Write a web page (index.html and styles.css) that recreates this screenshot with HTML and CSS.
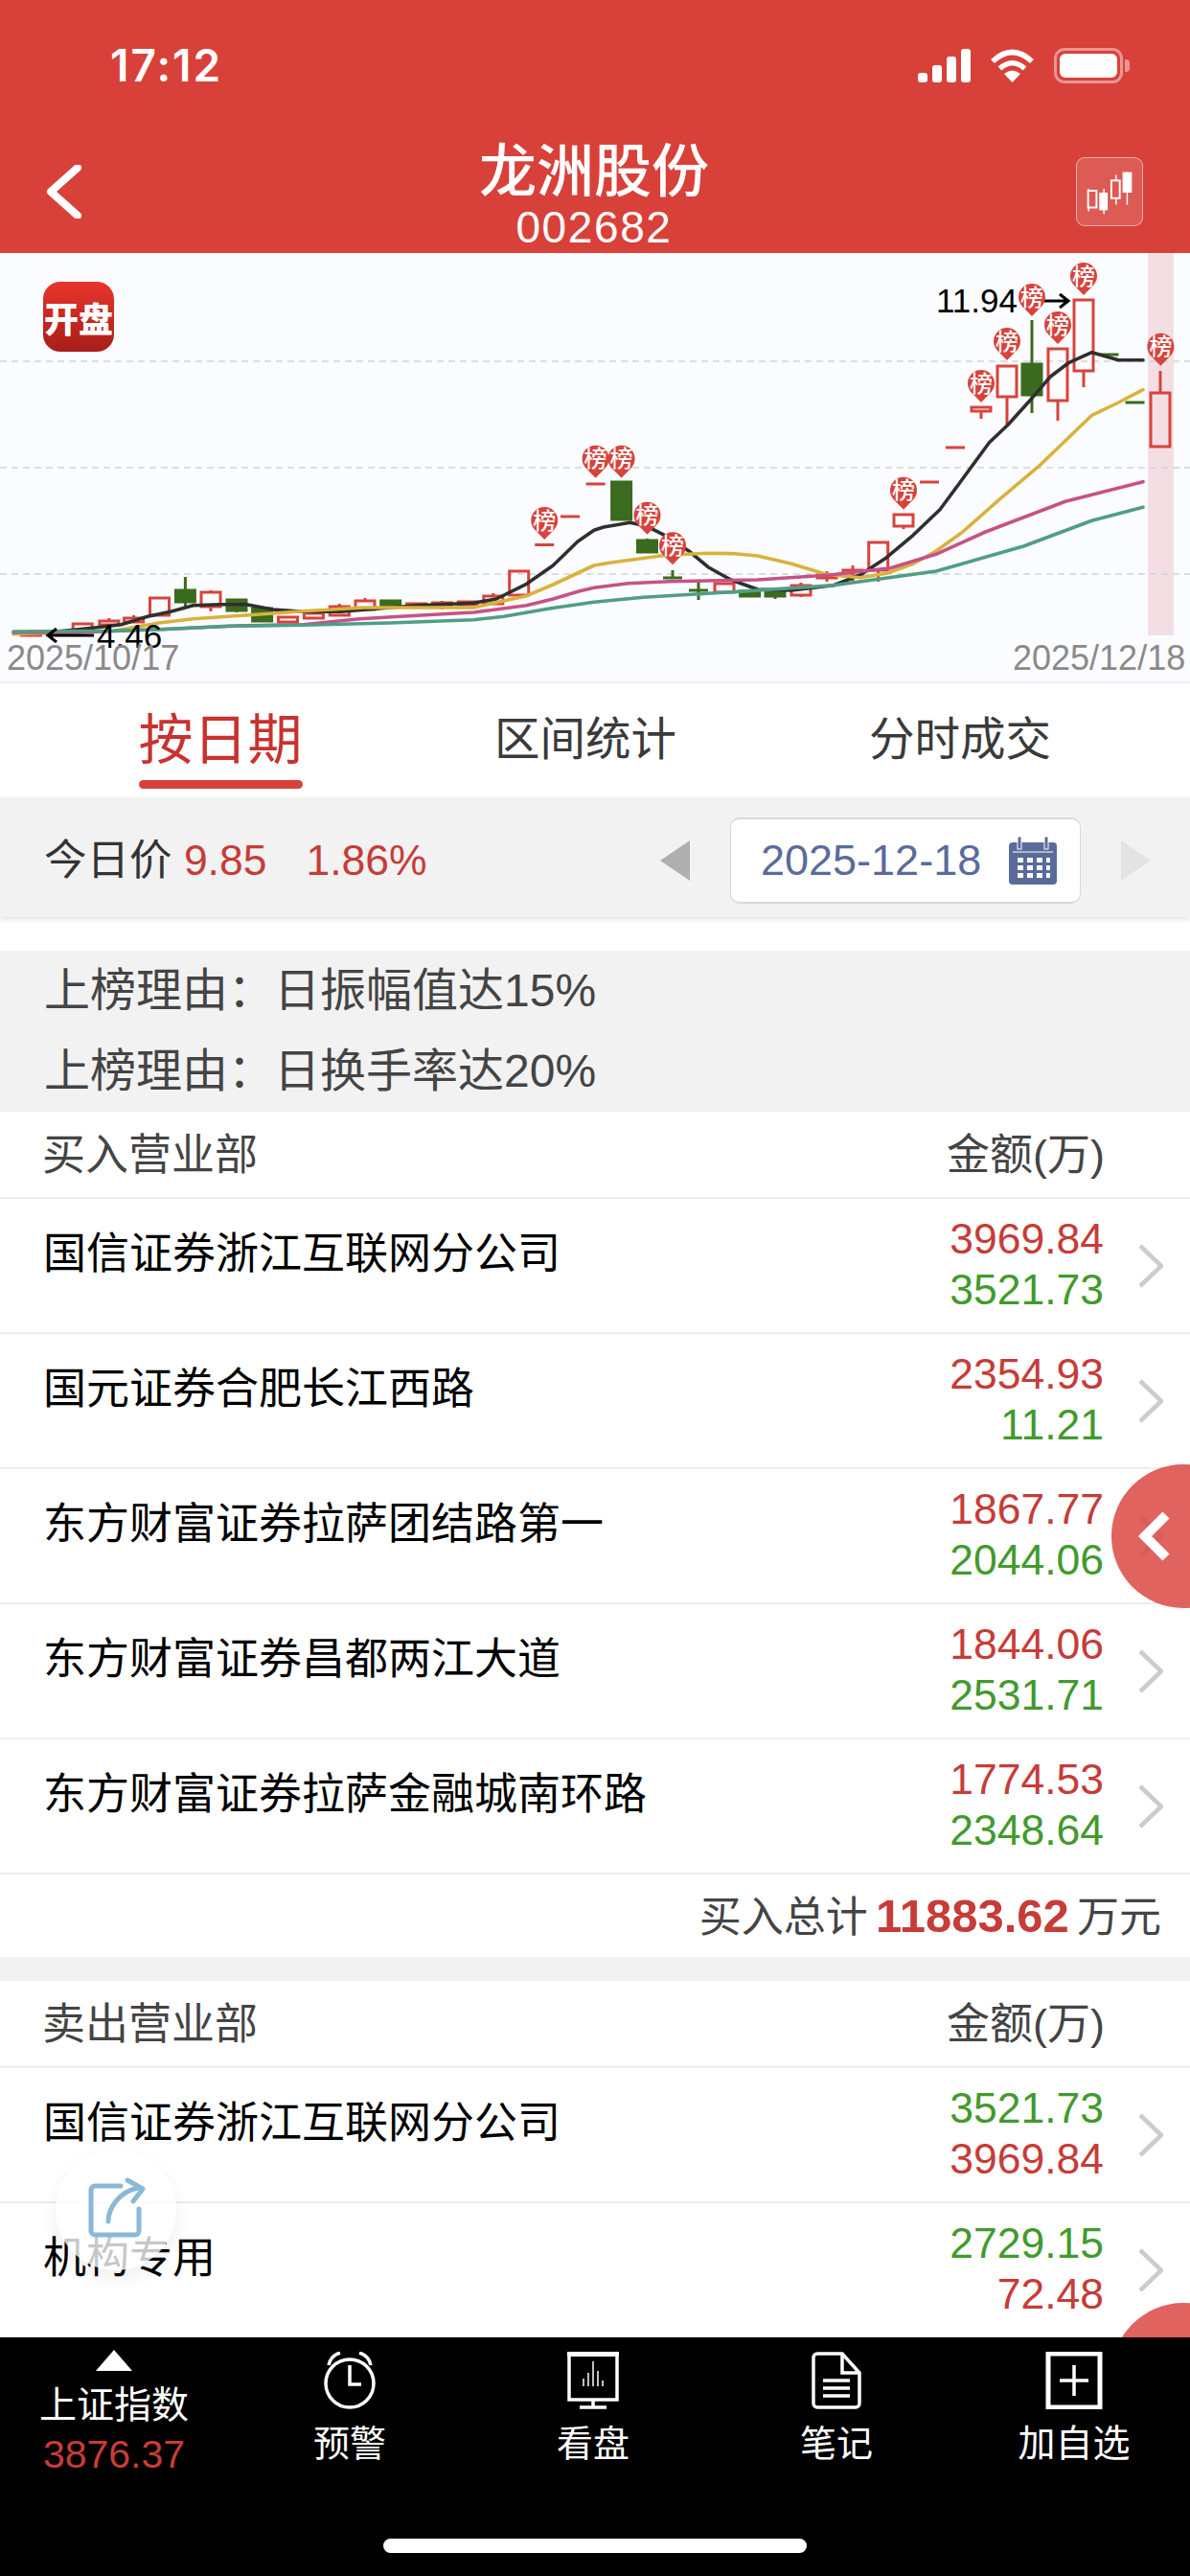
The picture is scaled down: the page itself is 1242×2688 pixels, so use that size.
FILE: index.html
```html
<!DOCTYPE html>
<html lang="zh-CN">
<head>
<meta charset="utf-8">
<title>龙洲股份</title>
<link rel="stylesheet" href="styles.css">
</head>
<body>
<div class="page">
  <header class="head">
    <div class="status">
      <span class="time">17:12</span>
      <div class="status-icons">
        <div class="signal"><i class="b1"></i><i class="b2"></i><i class="b3"></i><i class="b4"></i></div>
        <svg class="wifi" viewBox="0 0 47 35"><path class="wifi-arc" d="M3 13Q23.500 -6 44 13M10.500 20.500Q23.500 9 36.500 20.500"/><path class="wifi-dot" d="M23.500 35L15 26Q23.500 19 32 26Z"/></svg>
        <div class="battery"><div class="battery-fill"></div></div>
        <div class="battery-cap"></div>
      </div>
    </div>
    <nav class="nav">
      <svg class="back" viewBox="0 0 40 56"><path d="M34 3L6 28L34 53"/></svg>
      <div class="title"><div class="name">龙洲股份</div><div class="code">002682</div></div>
      <div class="kline-btn">
        <svg viewBox="0 0 70 72"><path class="k-line" d="M12.500 33V57M29 33V60M42 18V50M54 15V50"/><rect class="k-hollow" x="12" y="35" width="9" height="18"/><rect class="k-solid" x="24" y="37" width="9" height="19"/><rect class="k-hollow" x="37" y="24" width="9" height="19"/><rect class="k-solid" x="49" y="15" width="10" height="22"/></svg>
      </div>
    </nav>
  </header>

  <section class="chart">
    <svg class="chart-svg" viewBox="0 264 1242 448">
      <rect class="band" x="1198" y="264" width="27" height="399"/>
      <path class="grid" d="M0 377H1242M0 488H1242M0 599H1242"/>
      <path class="c-red" d="M22.400 662h20v1h-20zM32.400 657V662M49.300 659h20v3h-20zM76.200 651h20v7h-20zM103.900 648h20v4h-20zM113.900 645V648M129.600 645h20v4h-20zM139.600 642V645M156.500 624h20v18h-20zM210 618h20v15h-20zM220 616V618M220 633V638M290.500 644h20v5h-20zM317.400 640h20v5h-20zM344.300 633h20v9h-20zM354.300 630V633M371 627h20v9h-20zM381 624V627M424.500 630h20v3h-20zM451.400 629h20v3h-20zM461.400 627V636M478.300 628h20v3h-20zM504.800 622h20v8h-20zM514.800 619V622M531.700 596h20v25h-20zM558.200 568.500h20M585 539h20M611.600 505h20M746 609h20v9h-20zM756 618V620M826 611h20v10h-20zM836 608V611M836 621V623M853 600h20v3h-20zM863 596V607M880 595h20v6h-20zM890 590V607M906.700 566h20v29h-20zM916.700 595V607M933 537h20v12h-20zM943 549V552M960 503h20M987 467h20M1014 425h20v4h-20zM1024 429V437M1041 382h20v32h-20zM1051 414V443M1094 364h20v54h-20zM1104 418V439M1121 313h20v74h-20zM1131 387V404M1201 410h20v56h-20zM1211 387V410"/>
      <path class="c-green" d="M183.400 616h20v12h-20zM193.400 602V633M237 626h20v11h-20zM247 637V639M263.600 635h20v13h-20zM397.700 627h20v5h-20zM407.700 632V635M638.600 503h20v39h-20zM665.500 564h20v12h-20zM675.500 562V564M692 603h20M702 595V603M719 616h20M729 607V626M772.600 617h20v5h-20zM782.600 615V617M799 618h20v4h-20zM809 622V625M1067 380h20v32h-20zM1077 334V431M1147.500 370h20M1174.500 420h20"/>
      <polyline class="ma black" points="59.300,659 98.900,655 126.500,651.700 154.200,643.300 177.900,638.300 201.700,631.700 229.300,630.700 257,630.700 284.700,636 316.300,638.300 355.900,638.300 407.300,634 435,631.700 494.300,629.300 518,625 549.600,609.300 577.300,590 603,565 620,553.300 630,550 657.700,545.300 675.500,549.300 693.400,558.300 719,575 739,591.700 762.800,605 790.600,615 826,616 870,610.700 897.700,600 925.400,581.700 953.200,558.300 981,531.700 1000.800,505 1032.500,461.700 1052,443.300 1076,416.700 1096,393.300 1115.800,378.300 1139.600,367.700 1167.400,375.700 1193,375.700"/>
      <polyline class="ma gold" points="14,661.700 118.600,658.300 166,650 201.700,645.700 261,641.700 316.300,637.700 379.600,634 435,634 494.300,634 549.600,621.700 577.300,610 620,590 639.800,586.700 695.400,579.300 739,577.300 766.800,577.700 790.600,580 826,588.300 862,599.300 897.700,602.700 925.400,598.300 953.200,588.300 977,575 1004.800,555 1040.500,523.300 1084,486.700 1139.600,433.300 1167.400,420 1193,406.700"/>
      <polyline class="ma pink" points="14,660 79,660 166,656.700 257,652.700 316.300,651.700 375.600,645.700 435,642.300 494.300,639 549.600,631.700 577.300,625 605,616.700 620,613.300 655.700,608.700 699.300,606.700 790.600,605 866,600 929.400,592.700 977,578.300 1028.600,555 1111.900,523.300 1193,502.700"/>
      <polyline class="ma teal" points="14,659 118.600,658.300 170,656.700 237.200,653.300 316.300,652.300 407.300,650 494.300,646.700 526,643.300 573.400,635 620,628.300 671.600,623.300 754.900,618.300 869.900,610.700 977,596 1068.200,570 1139.600,543.300 1193,529.300"/>
      <path class="arrow" d="M98 663H50M59 656L50 663L59 670M1088 314H1115M1106 307L1115 314L1106 321"/>
      <text class="price" x="101" y="676">4.46</text>
      <text class="price" x="977" y="326">11.94</text>
      <g class="pin" transform="translate(568.200 563)"><path d="M0 0L-9.800 -10A14 14 0 1 1 9.800 -10Z"/><text y="-11.500">榜</text></g>
      <g class="pin" transform="translate(621.600 498.700)"><path d="M0 0L-9.800 -10A14 14 0 1 1 9.800 -10Z"/><text y="-11.500">榜</text></g>
      <g class="pin" transform="translate(648.600 498.700)"><path d="M0 0L-9.800 -10A14 14 0 1 1 9.800 -10Z"/><text y="-11.500">榜</text></g>
      <g class="pin" transform="translate(675.500 557.700)"><path d="M0 0L-9.800 -10A14 14 0 1 1 9.800 -10Z"/><text y="-11.500">榜</text></g>
      <g class="pin" transform="translate(702 589.300)"><path d="M0 0L-9.800 -10A14 14 0 1 1 9.800 -10Z"/><text y="-11.500">榜</text></g>
      <g class="pin" transform="translate(943 531.700)"><path d="M0 0L-9.800 -10A14 14 0 1 1 9.800 -10Z"/><text y="-11.500">榜</text></g>
      <g class="pin" transform="translate(1024 420)"><path d="M0 0L-9.800 -10A14 14 0 1 1 9.800 -10Z"/><text y="-11.500">榜</text></g>
      <g class="pin" transform="translate(1051 376)"><path d="M0 0L-9.800 -10A14 14 0 1 1 9.800 -10Z"/><text y="-11.500">榜</text></g>
      <g class="pin" transform="translate(1077 330)"><path d="M0 0L-9.800 -10A14 14 0 1 1 9.800 -10Z"/><text y="-11.500">榜</text></g>
      <g class="pin" transform="translate(1104 359)"><path d="M0 0L-9.800 -10A14 14 0 1 1 9.800 -10Z"/><text y="-11.500">榜</text></g>
      <g class="pin" transform="translate(1131 308)"><path d="M0 0L-9.800 -10A14 14 0 1 1 9.800 -10Z"/><text y="-11.500">榜</text></g>
      <g class="pin" transform="translate(1211.400 381.700)"><path d="M0 0L-9.800 -10A14 14 0 1 1 9.800 -10Z"/><text y="-11.500">榜</text></g>
      <text class="date" x="7" y="699">2025/10/17</text>
      <text class="date" x="1057" y="699">2025/12/18</text>
    </svg>
    <div class="open-logo">开盘</div>
  </section>

  <div class="tabs">
    <div class="tab active"><span>按日期</span></div>
    <div class="tab"><span>区间统计</span></div>
    <div class="tab"><span>分时成交</span></div>
  </div>

  <div class="toolbar">
    <div class="today">今日价 <b>9.85</b><b class="pct">1.86%</b></div>
    <svg class="tri" viewBox="0 0 31 42"><path class="tri-on" d="M31 0V42L0 21Z"/></svg>
    <div class="datebox">
      <span>2025-12-18</span>
      <svg class="cal" viewBox="0 0 50 50">
        <rect class="cal-body" x="0" y="6" width="50" height="44" rx="4"/>
        <rect class="cal-ring" x="9" y="0" width="4" height="13"/>
        <rect class="cal-ring" x="37" y="0" width="4" height="13"/>
        <path class="cal-head" d="M4 16H46"/>
        <path class="cal-dots" d="M9 22h6v5h-6zM19 22h6v5h-6zM29 22h6v5h-6zM39 22h4v5h-4zM9 30h6v5h-6zM19 30h6v5h-6zM29 30h6v5h-6zM39 30h4v5h-4zM9 38h6v5h-6zM19 38h6v5h-6zM29 38h6v5h-6zM39 38h4v5h-4z"/>
      </svg>
    </div>
    <svg class="tri" viewBox="0 0 31 42"><path class="tri-off" d="M0 0V42L31 21Z"/></svg>
  </div>

  <div class="reasons">
    <div class="reason">上榜理由：日振幅值达15%</div>
    <div class="reason">上榜理由：日换手率达20%</div>
  </div>

  <div class="thead"><span>买入营业部</span><span>金额(万)</span></div>
  <div class="row">
    <div class="dept">国信证券浙江互联网分公司</div>
    <div class="vals"><div class="up">3969.84</div><div class="down">3521.73</div></div>
    <svg class="more" viewBox="0 0 26 46"><path d="M2 2L24 23L2 44"/></svg>
  </div>
  <div class="row">
    <div class="dept">国元证券合肥长江西路</div>
    <div class="vals"><div class="up">2354.93</div><div class="down">11.21</div></div>
    <svg class="more" viewBox="0 0 26 46"><path d="M2 2L24 23L2 44"/></svg>
  </div>
  <div class="row">
    <div class="dept">东方财富证券拉萨团结路第一</div>
    <div class="vals"><div class="up">1867.77</div><div class="down">2044.06</div></div>
    <svg class="more" viewBox="0 0 26 46"><path d="M2 2L24 23L2 44"/></svg>
  </div>
  <div class="row">
    <div class="dept">东方财富证券昌都两江大道</div>
    <div class="vals"><div class="up">1844.06</div><div class="down">2531.71</div></div>
    <svg class="more" viewBox="0 0 26 46"><path d="M2 2L24 23L2 44"/></svg>
  </div>
  <div class="row">
    <div class="dept">东方财富证券拉萨金融城南环路</div>
    <div class="vals"><div class="up">1774.53</div><div class="down">2348.64</div></div>
    <svg class="more" viewBox="0 0 26 46"><path d="M2 2L24 23L2 44"/></svg>
  </div>
  <div class="total">买入总计 <b>11883.62</b> 万元</div>
  <div class="sep"></div>
  <div class="thead"><span>卖出营业部</span><span>金额(万)</span></div>
  <div class="row">
    <div class="dept">国信证券浙江互联网分公司</div>
    <div class="vals"><div class="down">3521.73</div><div class="up">3969.84</div></div>
    <svg class="more" viewBox="0 0 26 46"><path d="M2 2L24 23L2 44"/></svg>
  </div>
  <div class="row">
    <div class="dept">机构专用</div>
    <div class="vals"><div class="down">2729.15</div><div class="up">72.48</div></div>
    <svg class="more" viewBox="0 0 26 46"><path d="M2 2L24 23L2 44"/></svg>
  </div>

  <div class="float-share">
    <svg viewBox="0 0 64 64"><path d="M37 9H10a4 4 0 0 0-4 4V56a4 4 0 0 0 4 4H52a4 4 0 0 0 4-4V33M24 46C24 32 36 14 56 11M44 3L60 12L50 25"/></svg>
  </div>
  <div class="float-red fr-a"><svg viewBox="0 0 36 56"><path d="M30 6L8 28L30 50"/></svg></div>
  <div class="float-red fr-b"></div>

  <footer class="bar">
    <div class="item index">
      <svg class="index-tri" viewBox="0 0 38 22"><path d="M19 0L38 22H0Z"/></svg>
      <div class="index-name">上证指数</div>
      <div class="index-val">3876.37</div>
    </div>
    <div class="item">
      <svg class="ico" viewBox="0 0 60 60"><circle cx="30" cy="33" r="25"/><path d="M30 14V34H42"/><path d="M8 14Q10 4 20 1M52 14Q50 4 40 1"/></svg>
      <div class="lab">预警</div>
    </div>
    <div class="item">
      <svg class="ico" viewBox="0 0 60 60"><rect class="mon" x="5" y="2" width="50" height="48"/><path class="mon-top" d="M3 2H57"/><path class="mon-bars" d="M20 36V28M25 36V22M30 36V10M35 36V20M40 36V30"/><path d="M30 50V57M16 58H44"/></svg>
      <div class="lab">看盘</div>
    </div>
    <div class="item">
      <svg class="ico" viewBox="0 0 60 60"><path d="M6 6a4 4 0 0 1 4-4H36L54 22V54a4 4 0 0 1-4 4H10a4 4 0 0 1-4-4Z"/><path d="M36 2V22H54M16 30H44M16 38H44M16 46H44"/></svg>
      <div class="lab">笔记</div>
    </div>
    <div class="item">
      <svg class="ico" viewBox="0 0 60 60"><rect class="plus-box" x="3" y="2" width="54" height="56"/><path d="M30 14V46M15 30H45"/></svg>
      <div class="lab lab-wide">加自选</div>
    </div>
    <div class="home"></div>
  </footer>
</div>
</body>
</html>
```
FILE: styles.css
```css
* { box-sizing: border-box; }
html, body { margin: 0; padding: 0; background: #fff; }
body { font-family: "Liberation Sans", "Noto Sans CJK SC", sans-serif; color: #000; }
.page { position: relative; width: 1242px; height: 2688px; overflow: hidden; background: #fff; }

/* header */
.head { height: 264px; background: #D8413A; color: #fff; }
.status { height: 136px; display: flex; align-items: center; justify-content: space-between; padding: 0 63px 0 115px; }
.time { font-family: Inter, "Liberation Sans", sans-serif; font-size: 46px; font-weight: 600; letter-spacing: 2px; }
.status-icons { display: flex; align-items: center; }
.signal { display: flex; align-items: flex-end; gap: 5px; height: 35px; margin-right: 20px; }
.signal i { display: block; width: 10px; background: #fff; border-radius: 3px; }
.b1 { height: 10px; } .b2 { height: 18px; } .b3 { height: 27px; } .b4 { height: 35px; }
.wifi { width: 47px; height: 35px; margin-right: 20px; }
.wifi-arc { fill: none; stroke: #fff; stroke-width: 5.5; }
.wifi-dot { fill: #fff; }
.battery { width: 72px; height: 37px; border: 3px solid rgba(255,255,255,.45); border-radius: 11px; padding: 3px; }
.battery-fill { width: 100%; height: 100%; background: #fff; border-radius: 6px; }
.battery-cap { width: 5px; height: 13px; margin-left: 2px; background: rgba(255,255,255,.45); border-radius: 0 4px 4px 0; }

.nav { height: 128px; display: grid; grid-template-columns: 1fr auto 1fr; align-items: center; padding: 0 49px 0 47px; }
.back { width: 40px; height: 56px; }
.back path { fill: none; stroke: #fff; stroke-width: 8; stroke-linecap: round; stroke-linejoin: round; }
.title { text-align: center; padding-top: 12px; }
.name { font-size: 60px; line-height: 62px; font-weight: 500; }
.code { font-size: 46px; line-height: 52px; letter-spacing: 1.600px; }
.kline-btn { justify-self: end; width: 70px; height: 72px; border: 1px solid rgba(255,255,255,.5); border-radius: 9px; background: rgba(255,255,255,.14); }
.kline-btn svg { display: block; width: 68px; height: 70px; }
.k-line { fill: none; stroke: #fff; stroke-width: 1.5; }
.k-hollow { fill: #DD5A54; stroke: #fff; stroke-width: 2; }
.k-solid { fill: #fff; }

/* chart */
.chart { position: relative; height: 449px; background: #FBFCFF; border-bottom: 2px solid #EEEEF0; }
.chart-svg { display: block; width: 1242px; height: 448px; }
.band { fill: #F3DFE3; }
.grid { fill: none; stroke: #D0D3D8; stroke-width: 1.5; stroke-dasharray: 7 5; }
.c-red { fill: none; stroke: #D8433C; stroke-width: 3; }
.c-green { fill: #3B6B1E; stroke: #3B6B1E; stroke-width: 3; }
.ma { fill: none; stroke-width: 3.6; stroke-linejoin: round; stroke-linecap: round; }
.teal { stroke: #4F9E85; } .pink { stroke: #C65287; } .gold { stroke: #D9B23C; } .black { stroke: #2F2F2F; }
.arrow { fill: none; stroke: #000; stroke-width: 3; }
.price { font-size: 35px; fill: #000; }
.date { font-size: 36px; fill: #8A8A8A; }
.pin path { fill: #D8433C; }
.pin text { font-size: 24px; font-weight: 500; fill: #fff; text-anchor: middle; }
.open-logo { position: absolute; left: 45px; top: 30px; width: 74px; height: 73px; border-radius: 18px; background: linear-gradient(#E8352A, #A81E1A); color: #fff; font-size: 36px; font-weight: 900; display: flex; align-items: center; justify-content: center; white-space: nowrap; }

/* tabs */
.tabs { height: 119px; display: grid; grid-template-columns: 386px 376px 406px; padding-left: 37px; background: #fff; }
.tab { display: flex; justify-content: center; font-size: 47.500px; color: #3A3A3A; padding-top: 24px; }
.tab span { display: block; line-height: 70px; }
.tab.active { font-size: 57px; color: #C8322F; }
.tab.active span::after { content: ""; display: block; height: 9px; margin-top: 7px; background: #D8413A; border-radius: 5px; }

/* toolbar */
.toolbar { position: relative; height: 125px; background: #F2F2F2; display: flex; align-items: center; padding: 0 41px 0 46px; box-shadow: 0 3px 5px rgba(0,0,0,.1); }
.today { margin-right: auto; margin-top: -2px; font-size: 44.500px; color: #333; }
.today b { font-weight: 400; color: #C63C38; }
.today .pct { margin-left: 41px; }
.tri { width: 31px; height: 42px; margin-top: 7px; }
.tri-on { fill: #AFAFAF; }
.tri-off { fill: #E3E3E3; }
.datebox { width: 366px; height: 90px; margin: 7px 42px 0 42px; background: #fff; border: 1px solid #D9D9D9; border-top-width: 2px; border-bottom-width: 2px; border-radius: 10px; display: flex; align-items: center; justify-content: space-between; padding: 0 24px 0 31px; font-size: 45px; color: #5A6B9B; }
.cal { width: 50px; height: 50px; }
.cal-body { fill: #5A6B9B; }
.cal-ring { fill: #5A6B9B; stroke: #fff; stroke-width: 1; }
.cal-head { stroke: #fff; stroke-width: 1; }
.cal-dots { fill: #fff; }

/* list */
.reasons { margin-top: 35px; background: #F2F2F2; }
.reason { height: 84px; line-height: 84px; padding-left: 46px; font-size: 48px; color: #444; white-space: nowrap; }
.thead { height: 91px; display: flex; align-items: center; justify-content: space-between; padding: 0 89px 6px 44px; font-size: 45px; color: #444; border-bottom: 2px solid #EEE; }
.row { height: 141px; display: flex; align-items: flex-start; padding-right: 28px; border-bottom: 2px solid #EEE; }
.dept { flex: 1; padding: 28px 0 0 45px; font-size: 45px; line-height: 60px; }
.vals { padding-top: 15px; margin-right: 36px; text-align: right; font-size: 44.500px; line-height: 53px; }
.up { color: #C63C38; }
.down { color: #429A2D; }
.more { width: 26px; height: 46px; margin-top: 47px; }
.more path { fill: none; stroke: #CCC; stroke-width: 4.5; }
.total { height: 86px; line-height: 86px; text-align: right; padding-right: 30px; font-size: 44px; color: #444; word-spacing: -4px; }
.total b { font-size: 49px; color: #C63C38; }
.sep { height: 25px; background: #F2F2F2; }

/* floats */
.float-share { position: absolute; left: 58px; top: 2243px; width: 126px; height: 126px; border-radius: 50%; background: rgba(255,255,255,.78); box-shadow: 0 8px 18px rgba(0,0,0,.07); display: flex; align-items: center; justify-content: center; }
.float-share svg { width: 64px; height: 64px; margin-top: -4px; }
.float-share path { fill: none; stroke: #8AB8D8; stroke-width: 5; stroke-linecap: round; stroke-linejoin: round; }
.float-red { position: absolute; left: 1160px; width: 150px; height: 150px; border-radius: 50%; background: rgba(218,72,68,.85); }
.fr-a { top: 1528px; }
.fr-a svg { position: absolute; left: 27px; top: 47px; width: 36px; height: 56px; }
.fr-a path { fill: none; stroke: #fff; stroke-width: 10; }
.fr-b { top: 2403px; }

/* bottom bar */
.bar { position: absolute; left: 0; right: 0; bottom: 0; height: 249px; background: #000; color: #fff; display: grid; grid-template-columns: 238px 254px 254px 254px 242px; align-items: start; }
.item { display: flex; flex-direction: column; align-items: center; padding-top: 15px; }
.ico { width: 60px; height: 60px; }
.ico path, .ico circle, .ico rect { fill: none; stroke: #fff; stroke-width: 3.5; }
.ico .mon-top { stroke-width: 6; }
.ico .mon-bars { stroke-width: 1.5; }
.ico .plus-box { stroke-width: 5; }
.lab { font-size: 38px; line-height: 50px; margin-top: 11px; white-space: nowrap; }
.lab-wide { font-size: 39px; }
.index { padding-top: 13px; }
.index-tri { width: 38px; height: 22px; }
.index-tri path { fill: #fff; }
.index-name { font-size: 39px; line-height: 50px; margin-top: 11px; white-space: nowrap; }
.index-val { font-size: 41px; line-height: 46px; color: #C63C38; margin-top: 3px; }
.home { position: absolute; left: 400px; top: 210px; width: 442px; height: 15px; border-radius: 8px; background: #fff; }
```
